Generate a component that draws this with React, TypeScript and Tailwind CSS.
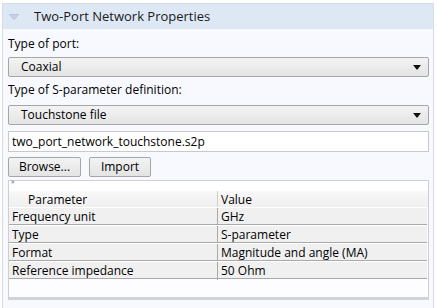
import React from "react";

const font = { fontFamily: '"Open Sans", "Noto Sans", sans-serif' };

function Arrow() {
  return (
    <svg width="8" height="5" viewBox="0 0 8 5" className="block">
      <path d="M0 0 H8 L4 5 Z" fill="#111" />
    </svg>
  );
}

function Select({ value }: { value: string }) {
  return (
    <div className="h-[20px] flex items-center justify-between rounded-[2px] border border-[#a6a6a6] bg-gradient-to-b from-[#f3f3f3] to-[#e4e4e4] pl-[12px] pr-[7px] text-[12px] text-black">
      <span>{value}</span>
      <Arrow />
    </div>
  );
}

function Button({ label, w }: { label: string; w: string }) {
  return (
    <div className={`h-[20px] ${w} flex items-center justify-center rounded-[2px] border border-[#a6a6a6] bg-gradient-to-b from-[#f3f3f3] to-[#e4e4e4] text-[12px] text-black`}>
      {label}
    </div>
  );
}

const rows = [
  ["Frequency unit", "GHz"],
  ["Type", "S-parameter"],
  ["Format", "Magnitude and angle (MA)"],
  ["Reference impedance", "50 Ohm"],
];

export default function App() {
  return (
    <div className="w-[437px] h-[308px] bg-white pt-[3px] overflow-hidden" style={font}>
      <div className="ml-[2px] w-[432px] h-[305px] border-l border-r border-t border-[#d6dde8] bg-[#f7f9fe]">
        <div className="h-[25px] bg-[#dee8f5] flex items-center">
          <svg width="10" height="6" viewBox="0 0 10 6" className="ml-[6px]">
            <path d="M0.5 0.5 H9.5 L5 5.5 Z" fill="#c4d3e8" stroke="#a9bcd8" strokeWidth="0.8" />
          </svg>
          <span className="ml-[15px] text-[13px] text-[#1a1a1a]">Two-Port Network Properties</span>
        </div>
        <div className="pl-[5px] pr-[4px]">
          <div className="h-[18px] mt-[6px] flex items-center text-[12px] text-black">Type of port:</div>
          <div className="mt-[4px]">
            <Select value="Coaxial" />
          </div>
          <div className="h-[18px] mt-[4px] flex items-center text-[12px] text-black">Type of S-parameter definition:</div>
          <div className="mt-[6px]">
            <Select value="Touchstone file" />
          </div>
          <div className="mt-[6px] h-[21px] flex items-center border border-[#c9c9c9] bg-white pl-[3px] text-[12px] text-black">
            two_port_network_touchstone.s2p
          </div>
          <div className="mt-[5px] flex gap-[8px]">
            <Button label="Browse..." w="w-[73px]" />
            <Button label="Import" w="w-[62px]" />
          </div>
          <div className="mt-[3px] h-[120px] border border-[#cfcfcf] border-b-[3px] border-b-[#d3d3d3] bg-[#fdfdff] flex flex-col">
            <div className="h-[10px] bg-white relative">
              <span className="absolute left-[2px] top-[-3px] text-[7px] leading-none text-[#555]">»</span>
            </div>
            <div className="h-[16px] grid grid-cols-[209px_1fr] bg-gradient-to-b from-[#f8f8f8] to-[#efefef] text-[12px] text-black">
              <div className="flex items-center pl-[19px] border-r border-[#d0d0d0]">Parameter</div>
              <div className="flex items-center pl-[3px]">Value</div>
            </div>
            {rows.map(([k, v]) => (
              <div key={k} className="h-[18px] grid grid-cols-[209px_1fr] bg-[#f0f0f0] border-t border-white border-b border-b-[#a9a9a9] mr-[1px] text-[12px] text-black">
                <div className="flex items-center pl-[3px] border-r border-[#a9a9a9]">{k}</div>
                <div className="flex items-center pl-[3px]">{v}</div>
              </div>
            ))}
          </div>
        </div>
      </div>
    </div>
  );
}
